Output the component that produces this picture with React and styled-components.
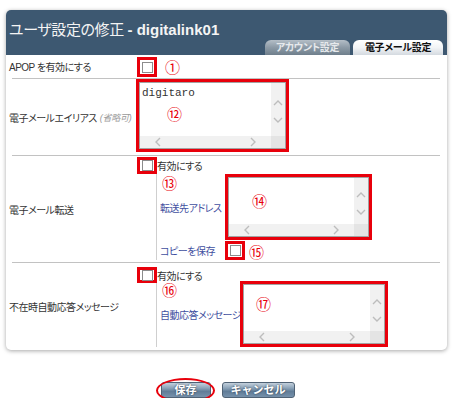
import React from "react";
import styled, { createGlobalStyle } from "styled-components";

const GlobalStyle = createGlobalStyle`
  body {
    margin: 0;
    background: #fff;
    font-family: "Liberation Sans", "Noto Sans CJK JP", sans-serif;
    font-feature-settings: "palt";
  }
`;

const RED = "#e8000b";

const Page = styled.div`
  width: 441px;
  padding: 10px 0 0 6px;
`;

const Panel = styled.div`
  background: #fff;
  border-radius: 5px;
  box-shadow: 0 1px 4px rgba(0, 0, 0, 0.35);
`;

const Header = styled.div`
  height: 45px;
  background: #3d5871;
  border-radius: 5px 5px 0 0;
  display: flex;
  flex-direction: column;
  padding: 0 4px 0 3px;
`;

const Title = styled.div`
  height: 30px;
  padding-top: 11px;
  box-sizing: border-box;
  line-height: 18px;
  font-size: 15px;
  letter-spacing: -0.4px;
  color: #f4f4f4;
  white-space: nowrap;
  b {
    font-weight: bold;
    letter-spacing: 0;
  }
`;

const Tabs = styled.div`
  display: flex;
  justify-content: flex-end;
  gap: 3px;
  height: 15px;
`;

const Tab = styled.div`
  width: ${(p) => p.w}px;
  border-radius: 6px 6px 0 0;
  text-align: center;
  line-height: 15px;
  font-size: 10px;
  letter-spacing: -0.3px;
  font-weight: bold;
  color: ${(p) => (p.active ? "#111" : "#e6e9ec")};
  background: ${(p) =>
    p.active
      ? "linear-gradient(#ffffff, #f2f4f6 50%, #d4dae0)"
      : "linear-gradient(#b4bec7, #8c9aa6 50%, #6f7f8c)"};
`;

const Divider = styled.div`
  height: 1px;
  margin: 0 7px 0 6px;
  background: #c2c2c2;
`;

const Row = styled.div`
  display: grid;
  grid-template-columns: 131px 1fr;
  height: ${(p) => p.h}px;
`;

const Label = styled.div`
  display: flex;
  align-items: center;
  padding-left: 3px;
  font-size: 10px;
  letter-spacing: -0.5px;
  color: #333;
  white-space: nowrap;
`;

const Note = styled.span`
  font-size: 9px;
  font-style: italic;
  letter-spacing: -0.3px;
  color: #9a9a9a;
  margin-left: 3px;
`;

const Cell = styled.div`
  display: flex;
  flex-direction: column;
  align-items: flex-start;
  padding-top: ${(p) => p.top || 0}px;
  margin-left: ${(p) => p.shift || 0}px;
`;

const Mark = styled.div`
  position: relative;
  box-sizing: border-box;
  width: ${(p) => p.w}px;
  height: ${(p) => p.h}px;
  border: 3px solid ${RED};
  display: flex;
  align-items: center;
  justify-content: center;
  flex-shrink: 0;
`;

const Num = styled.span`
  position: absolute;
  left: ${(p) => p.x}px;
  top: ${(p) => p.y}px;
  font-family: "Noto Sans CJK JP", sans-serif;
  font-size: 15px;
  line-height: 15px;
  letter-spacing: 0;
  color: ${RED};
  white-space: nowrap;
`;

const Check = styled.span`
  width: 11px;
  height: 11px;
  box-sizing: border-box;
  border: 1px solid #8c8c8c;
  background: #fff;
  flex-shrink: 0;
`;

const CheckLine = styled.div`
  display: flex;
  align-items: center;
  margin-top: ${(p) => p.top}px;
  font-size: 10px;
  letter-spacing: -0.5px;
  color: #333;
  white-space: nowrap;
`;

const SubArea = styled.div`
  margin-left: 19px;
  margin-top: ${(p) => p.top || 0}px;
  border-left: 1px solid #cfcfcf;
  display: grid;
  grid-template-columns: ${(p) => p.labelW}px auto;
  row-gap: 1px;
`;

const SubLabel = styled.div`
  display: flex;
  align-items: center;
  padding-left: 3px;
  font-size: 10px;
  letter-spacing: -0.5px;
  color: #3f4fa0;
  white-space: nowrap;
`;

const Area = styled.div`
  width: 100%;
  height: 100%;
  box-sizing: border-box;
  border: 1px solid #a3a3a3;
  display: grid;
  grid-template-columns: 1fr 14px;
  grid-template-rows: 1fr 12px;
  background: #fff;
`;

const AreaText = styled.div`
  padding: 4px 2px;
  font-family: "Liberation Mono", monospace;
  font-size: 11px;
  letter-spacing: 0;
  color: #333;
`;

const VScroll = styled.div`
  background: #f1f1f1;
  display: flex;
  flex-direction: column;
  align-items: center;
  justify-content: center;
  gap: 9px;
  padding-top: 4px;
`;

const HScroll = styled.div`
  background: #f1f1f1;
  display: flex;
  align-items: center;
  justify-content: space-between;
  padding: 0 14px;
`;

const Corner = styled.div`
  background: #e4e4e4;
`;

const Chevron = ({ dir }) => {
  const d = {
    up: "M1 6 L5 2 L9 6",
    down: "M1 2 L5 6 L9 2",
    left: "M6 1 L2 5 L6 9",
    right: "M2 1 L6 5 L2 9",
  }[dir];
  const vert = dir === "up" || dir === "down";
  return (
    <svg width={vert ? 10 : 8} height={vert ? 8 : 10} viewBox={vert ? "0 0 10 8" : "0 0 8 10"}>
      <path d={d} fill="none" stroke="#bdbdbd" strokeWidth="1.4" />
    </svg>
  );
};

const FakeArea = ({ text }) => (
  <Area>
    <AreaText>{text}</AreaText>
    <VScroll>
      <Chevron dir="up" />
      <Chevron dir="down" />
    </VScroll>
    <HScroll>
      <Chevron dir="left" />
      <Chevron dir="right" />
    </HScroll>
    <Corner />
  </Area>
);

const Buttons = styled.div`
  display: flex;
  justify-content: center;
  gap: 11px;
  margin-top: 32px;
  padding-left: 2px;
`;

const Btn = styled.button`
  position: relative;
  width: ${(p) => p.w}px;
  height: 16px;
  padding: 0;
  border: 1px solid #4f6275;
  border-radius: 3px;
  background: linear-gradient(#c3d0dc, #8ea5ba 35%, #617d98 60%, #7691ab);
  color: #fff;
  font-family: "Liberation Sans", "Noto Sans CJK JP", sans-serif;
  font-size: 11px;
  font-weight: bold;
  line-height: 14px;
  text-shadow: 0 0 2px #1d2f42;
`;

const Ring = styled.span`
  position: absolute;
  left: -6px;
  top: -5px;
  width: 59px;
  height: 25px;
  box-sizing: border-box;
  border: 2px solid ${RED};
  border-radius: 50%;
`;

export default function App() {
  return (
    <>
      <GlobalStyle />
      <Page>
        <Panel>
          <Header>
            <Title>
              ユーザ設定の修正 <b>- digitalink01</b>
            </Title>
            <Tabs>
              <Tab w={85}>アカウント設定</Tab>
              <Tab w={90} active>
                電子メール設定
              </Tab>
            </Tabs>
          </Header>

          <Row h={23}>
            <Label>APOP を有効にする</Label>
            <Cell top={2}>
              <Mark w={20} h={20}>
                <Check />
                <Num x={25} y={-1}>①</Num>
              </Mark>
            </Cell>
          </Row>
          <Divider />

          <Row h={76}>
            <Label>
              電子メールエイリアス<Note>(省略可)</Note>
            </Label>
            <Cell shift={-1}>
              <Mark w={153} h={73}>
                <FakeArea text="digitaro" />
                <Num x={28} y={24}>⑫</Num>
              </Mark>
            </Cell>
          </Row>
          <Divider />

          <Row h={106}>
            <Label>電子メール転送</Label>
            <Cell>
              <CheckLine top={1}>
                <Mark w={20} h={17}>
                  <Check />
                  <Num x={22} y={15}>⑬</Num>
                </Mark>
                有効にする
              </CheckLine>
              <SubArea labelW={68}>
                <SubLabel>転送先アドレス</SubLabel>
                <Mark w={147} h={66}>
                  <FakeArea />
                  <Num x={24} y={16}>⑭</Num>
                </Mark>
                <SubLabel>コピーを保存</SubLabel>
                <Mark w={20} h={19}>
                  <Check />
                  <Num x={21} y={0}>⑮</Num>
                </Mark>
              </SubArea>
            </Cell>
          </Row>
          <Divider />

          <Row h={87}>
            <Label>不在時自動応答メッセージ</Label>
            <Cell>
              <CheckLine top={4}>
                <Mark w={20} h={16}>
                  <Check />
                  <Num x={22} y={12}>⑯</Num>
                </Mark>
                有効にする
              </CheckLine>
              <SubArea labelW={83} top={-2}>
                <SubLabel>自動応答メッセージ</SubLabel>
                <Mark w={148} h={66}>
                  <FakeArea />
                  <Num x={13} y={12}>⑰</Num>
                </Mark>
              </SubArea>
            </Cell>
          </Row>
        </Panel>

        <Buttons>
          <Btn w={50}>
            保存
            <Ring />
          </Btn>
          <Btn w={73}>キャンセル</Btn>
        </Buttons>
      </Page>
    </>
  );
}
